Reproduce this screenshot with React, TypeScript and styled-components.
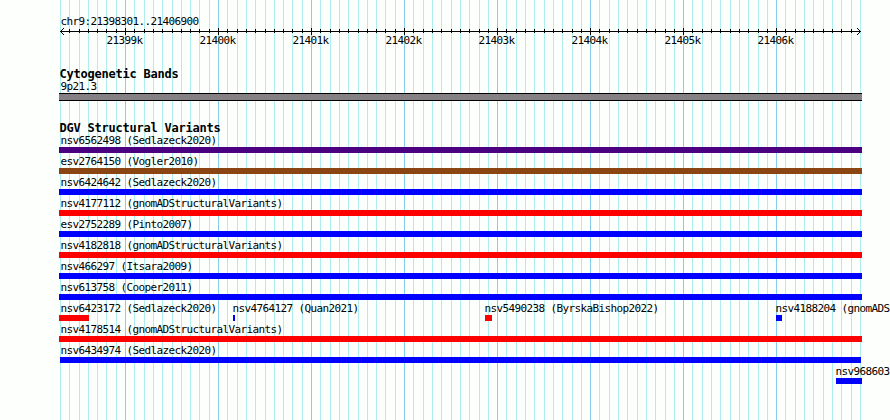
import { FC } from 'react';
import styled, { createGlobalStyle } from 'styled-components';

const REGION = { ref: 'chr9', start: 21398301, end: 21406900 };
const PAD_LEFT = 60;
const TRACK_WIDTH = 800;
const HEIGHT = 420;

const INDIGO = '#4b0082';
const BROWN = '#8b4513';
const BLUE = '#0000ff';
const RED = '#ff0000';

type Feature = {
	name: string;
	color: string;
	left: number;
	width: number;
	labelLeft?: number;
};

const full = (name: string, color: string): Feature[] => [{ name, color, left: 59, width: 803 }];

const lanes: Feature[][] = [
	full('nsv6562498 (Sedlazeck2020)', INDIGO),
	full('esv2764150 (Vogler2010)', BROWN),
	full('nsv6424642 (Sedlazeck2020)', BLUE),
	full('nsv4177112 (gnomADStructuralVariants)', RED),
	full('esv2752289 (Pinto2007)', BLUE),
	full('nsv4182818 (gnomADStructuralVariants)', RED),
	full('nsv466297 (Itsara2009)', BLUE),
	full('nsv613758 (Cooper2011)', BLUE),
	[
		{ name: 'nsv6423172 (Sedlazeck2020)', color: RED, left: 59, width: 30 },
		{ name: 'nsv4764127 (Quan2021)', color: BLUE, left: 233, width: 2, labelLeft: 232.4 },
		{ name: 'nsv5490238 (ByrskaBishop2022)', color: RED, left: 485, width: 7, labelLeft: 484.4 },
		{ name: 'nsv4188204 (gnomADS', color: BLUE, left: 776, width: 6, labelLeft: 775.4 },
	],
	full('nsv4178514 (gnomADStructuralVariants)', RED),
	[{ name: 'nsv6434974 (Sedlazeck2020)', color: BLUE, left: 60, width: 801 }],
	[{ name: 'nsv968603', color: BLUE, left: 836, width: 26, labelLeft: 835.4 }],
];

const toX = (pos: number) =>
	Math.round(PAD_LEFT + ((pos - REGION.start) * TRACK_WIDTH) / (REGION.end - REGION.start + 1));

const ticks = Array.from({ length: 87 }, (_, i) => {
	const pos = 21398300 + i * 100;
	return { pos, x: toX(pos), major: pos % 1000 === 0 };
});
const majorTicks = ticks.filter((tick) => tick.major);

const GridLines: FC = () => (
	<Backdrop width="890" height={HEIGHT} shapeRendering="crispEdges">
		{ticks.map(({ pos, x, major }) => (
			<rect key={pos} x={x} y={0} width={1} height={HEIGHT} fill={major ? '#87ceeb' : '#afeeee'} />
		))}
	</Backdrop>
);

const Ruler: FC = () => (
	<Axis width="890" height="7" shapeRendering="crispEdges">
		<rect x={60} y={3} width={801} height={1} />
		{ticks.slice(1, -1).map(({ pos, x, major }) => (
			<rect key={pos} x={x} y={major ? 0 : 1} width={1} height={major ? 7 : 4} />
		))}
		{[1, 2, 3].map((step) => (
			<g key={step}>
				<rect x={60 + step} y={3 - step} width={1} height={1} />
				<rect x={60 + step} y={3 + step} width={1} height={1} />
				<rect x={860 - step} y={3 - step} width={1} height={1} />
				<rect x={860 - step} y={3 + step} width={1} height={1} />
			</g>
		))}
	</Axis>
);

const App: FC = () => (
	<>
		<GlobalStyle />
		<Panel>
			<GridLines />
			<Content>
				<RegionName>
					{REGION.ref}:{REGION.start}..{REGION.end}
				</RegionName>
				<Ruler />
				<Scale>
					{majorTicks.map(({ pos, x }) => (
						<ScaleLabel key={pos} $left={x - 18.6}>
							{pos / 1000}k
						</ScaleLabel>
					))}
				</Scale>
				<Cytoband>
					<TrackTitle>Cytogenetic Bands</TrackTitle>
					<BandName>9p21.3</BandName>
					<Band />
				</Cytoband>
				<Variants>
					<TrackTitle>DGV Structural Variants</TrackTitle>
					{lanes.map((lane) => (
						<Lane key={lane[0].name}>
							{lane.map(({ name, color, left, width, labelLeft = 60.4 }) => (
								<FeatureItem key={name}>
									<FeatureLabel $left={labelLeft}>{name}</FeatureLabel>
									<FeatureBar $left={left} $width={width} $color={color} />
								</FeatureItem>
							))}
						</Lane>
					))}
				</Variants>
			</Content>
		</Panel>
	</>
);

const GlobalStyle = createGlobalStyle`
	body {
		margin: 0;
		background: #fdfffc;
	}
`;

const Panel = styled.main`
	position: relative;
	width: 890px;
	height: ${HEIGHT}px;
	overflow: hidden;
	background: #fdfffc;
	color: #000;
	font-family: 'DejaVu Sans Mono', 'Liberation Mono', monospace;
	font-size: 11px;
	letter-spacing: -0.622px;
	white-space: pre;
`;

const Backdrop = styled.svg`
	position: absolute;
	top: 0;
	left: 0;
`;

const Content = styled.div`
	position: relative;
	display: flex;
	flex-direction: column;
	padding-top: 14px;
`;

const RegionName = styled.div`
	height: 14px;
	padding-left: 60.4px;
	line-height: 16px;
`;

const Axis = styled.svg`
	display: block;
`;

const Scale = styled.div`
	display: grid;
	height: 12px;
	line-height: 12px;
`;

const ScaleLabel = styled.span<{ $left: number }>`
	grid-area: 1 / 1;
	margin-left: ${(props) => props.$left}px;
`;

const Cytoband = styled.section`
	padding-top: 20px;
`;

const TrackTitle = styled.h2`
	margin: 0;
	padding-left: 59.4px;
	height: 13px;
	font-size: 12px;
	font-weight: bold;
	line-height: 15px;
	letter-spacing: -0.224px;
`;

const BandName = styled.div`
	height: 13px;
	padding-left: 60.4px;
	line-height: 13px;
`;

const Band = styled.div`
	box-sizing: border-box;
	width: 803px;
	height: 8px;
	margin-left: 59px;
	border: solid #000;
	border-width: 1px 0;
	background: #848084;
`;

const Variants = styled.section`
	padding-top: 20px;
`;

const Lane = styled.div`
	display: grid;
	height: 21px;
`;

const FeatureItem = styled.div`
	grid-area: 1 / 1;
`;

const FeatureLabel = styled.div<{ $left: number }>`
	height: 13px;
	margin-left: ${(props) => props.$left}px;
	line-height: 13px;
`;

const FeatureBar = styled.div<{ $left: number; $width: number; $color: string }>`
	width: ${(props) => props.$width}px;
	height: 6px;
	margin-left: ${(props) => props.$left}px;
	background: ${(props) => props.$color};
`;

export default App;
